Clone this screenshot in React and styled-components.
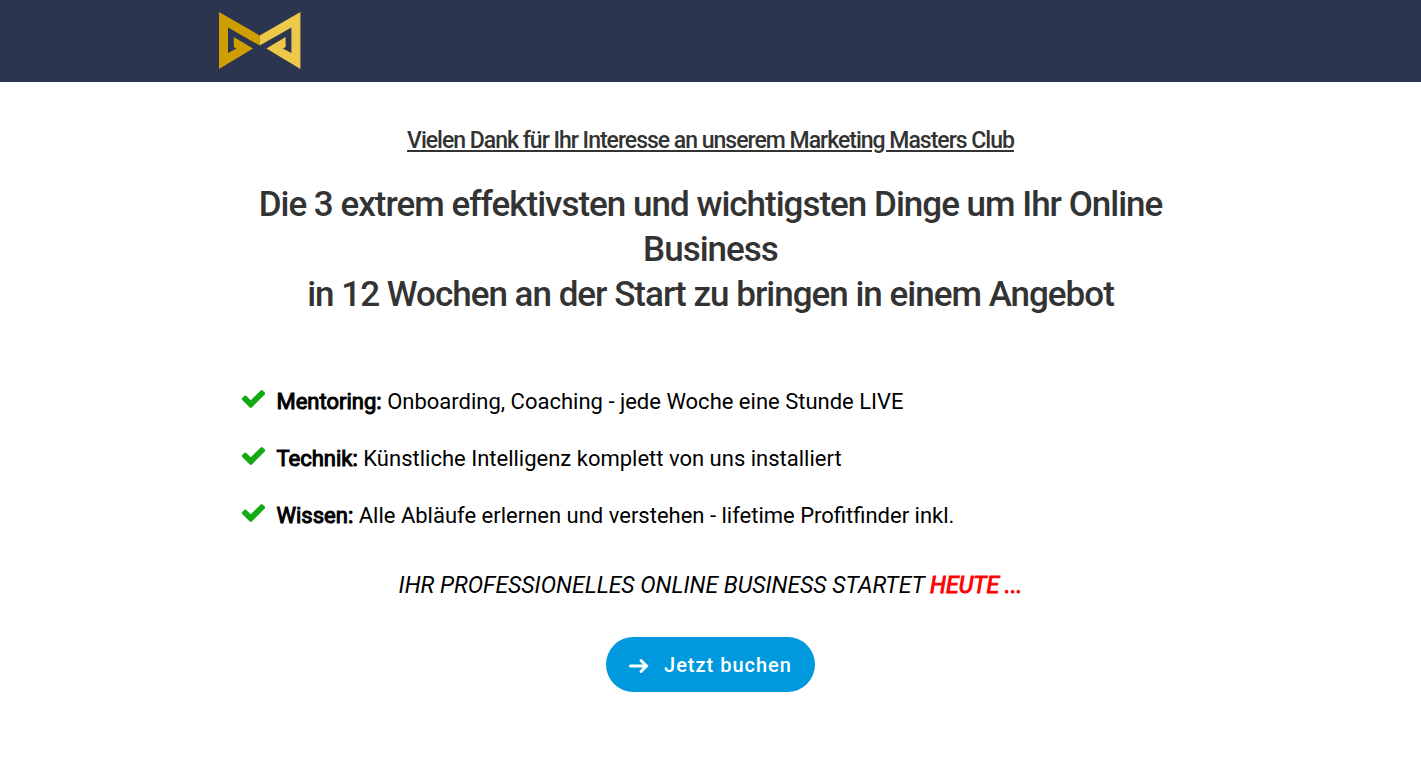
import React from 'react'
import styled, { createGlobalStyle } from 'styled-components'

const benefits = [
  { title: 'Mentoring:', text: 'Onboarding, Coaching - jede Woche eine Stunde LIVE' },
  { title: 'Technik:', text: 'Künstliche Intelligenz komplett von uns installiert' },
  { title: 'Wissen:', text: 'Alle Abläufe erlernen und verstehen - lifetime Profitfinder inkl.' },
]

const Logo = () => (
  <LogoLink href="#" aria-label="Marketing Masters Club">
    <svg viewBox="0 0 82 58" width="82" height="58" aria-hidden="true">
      <path fill="#cf9f02" d="M0 0 L40.7 23.5 V33.5 L9 15.5 V41 L17.5 36.5 L14.8 35 V25 L34 36.5 L0 57 Z" />
      <path fill="#eec84b" d="M81.4 0 L40.7 23.5 V33.5 L72.4 15.5 V41 L63.9 36.5 L66.6 35 V25 L47.4 36.5 L81.4 57 Z" />
    </svg>
  </LogoLink>
)

const CheckIcon = () => (
  <svg viewBox="0 0 1792 1792" aria-hidden="true">
    <path
      fill="currentColor"
      d="M1671 566q0 40-28 68l-724 724-136 136q-28 28-68 28t-68-28l-136-136-362-362q-28-28-28-68t28-68l136-136q28-28 68-28t68 28l294 295 656-657q28-28 68-28t68 28l136 136q28 28 28 68z"
    />
  </svg>
)

const App = () => {
  return (
    <>
      <GlobalStyle />
      <Header>
        <Container>
          <Logo />
        </Container>
      </Header>
      <Main>
        <Subtitle>Vielen Dank für Ihr Interesse an unserem Marketing Masters Club</Subtitle>
        <Title>
          Die 3 extrem effektivsten und wichtigsten Dinge um Ihr Online Business
          <br />
          in 12 Wochen an der Start zu bringen in einem Angebot
        </Title>
        <BenefitList>
          {benefits.map((item) => (
            <Benefit key={item.title}>
              <CheckIcon />
              <span>
                <Strong>{item.title}</Strong> {item.text}
              </span>
            </Benefit>
          ))}
        </BenefitList>
        <Slogan>
          IHR PROFESSIONELLES ONLINE BUSINESS STARTET <Strong $color="#ff0000">HEUTE ...</Strong>
        </Slogan>
        <BookButton type="button">
          <svg viewBox="0 0 20 16" width="20" height="16" aria-hidden="true">
            <path d="M1.5 9 H17 M12 3.5 L17.5 9 L12 14.5" />
          </svg>
          Jetzt buchen
        </BookButton>
      </Main>
    </>
  )
}

export default App

const GlobalStyle = createGlobalStyle`
  * {
    box-sizing: border-box;
  }
  body {
    margin: 0;
    background: #ffffff;
    color: #000000;
    font-family: Roboto, sans-serif;
    font-size: 22px;
  }
`

const Header = styled.header`
  background: #2b354f;
  padding: 12px 20px;
`

const Container = styled.div`
  display: flex;
  max-width: 984px;
  margin: 0 auto;
`

const LogoLink = styled.a`
  svg {
    display: block;
  }
`

const Main = styled.main`
  display: flex;
  flex-direction: column;
  align-items: center;
  max-width: 1000px;
  margin: 0 auto;
  padding: 44px 20px 60px;
`

const Subtitle = styled.h2`
  margin: 0 0 27px;
  color: #333333;
  font-size: 23px;
  font-weight: 500;
  line-height: 29px;
  letter-spacing: -1px;
  text-align: center;
  text-decoration: underline;
`

const Title = styled.h1`
  margin: 0 0 68px;
  color: #333333;
  font-size: 35px;
  font-weight: 500;
  line-height: 45px;
  letter-spacing: -1px;
  text-align: center;
`

const BenefitList = styled.ul`
  display: flex;
  flex-direction: column;
  align-self: stretch;
  gap: 24px;
  margin: 0 0 37px;
  padding: 0;
  list-style: none;
`

const Benefit = styled.li`
  display: flex;
  gap: 10px;
  padding-left: 9px;
  line-height: 33px;
  svg {
    flex: none;
    width: 27px;
    height: 27px;
    color: #13aa13;
  }
`

/* thickened regular weight, keeps the widths of the body text */
const Strong = styled.strong`
  color: ${(props) => props.$color || 'inherit'};
  font-weight: 400;
  -webkit-text-stroke: 1px currentColor;
`

const Slogan = styled.p`
  margin: 0 0 35px;
  font-size: 23px;
  font-style: italic;
  line-height: 33px;
  text-align: center;
`

const BookButton = styled.button`
  display: flex;
  align-items: center;
  gap: 15px;
  height: 55px;
  padding: 0 23px;
  border: 0;
  border-radius: 28px;
  background: #0099de;
  color: #ffffff;
  font-family: inherit;
  font-size: 20px;
  font-weight: 500;
  letter-spacing: 1px;
  cursor: pointer;
  svg {
    fill: none;
    stroke: currentColor;
    stroke-width: 3;
    stroke-linecap: round;
    overflow: visible;
  }
`
